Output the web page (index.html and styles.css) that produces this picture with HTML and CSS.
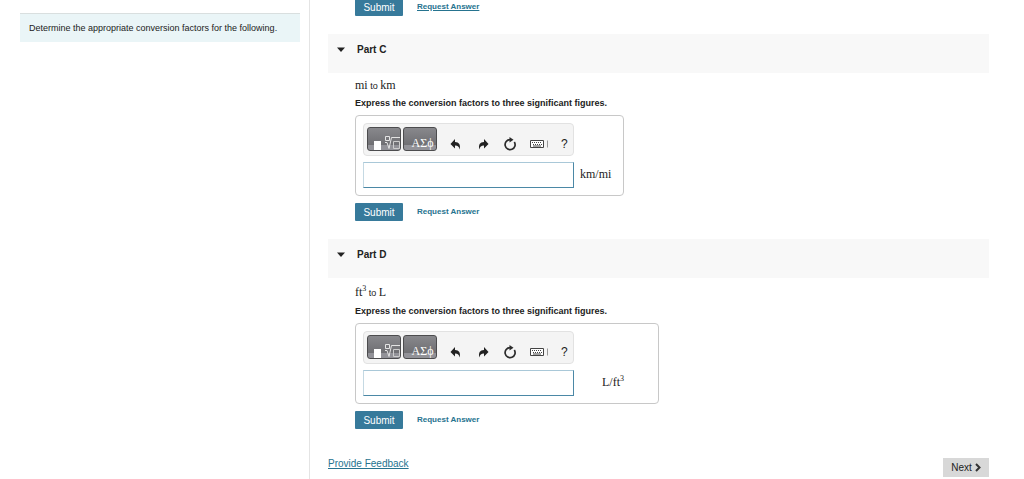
FILE: index.html
```
<!DOCTYPE html>
<html lang="en">
  <head>
    <meta charset="utf-8">
    <meta name="viewport" content="width=device-width, initial-scale=1.0">
    <title>Conversion Factors</title>
    <link rel="stylesheet" href="styles.css">
  </head>

  <body>
    <!-- shared icons -->
    <svg class="icons" width="0" height="0">
      <symbol id="caret" viewBox="0 0 8 5"><path d="M0 .5h8L4 5z" fill="#222"/></symbol>
      <symbol id="template" viewBox="0 0 32 22">
        <path d="M6 13h7v9H6z" fill="#fff"/>
        <path d="M17.500 8.500h4v4h-4z M17 14.500h2l2 6 2.500-11H32" fill="none" stroke="#e4e4e4"/>
        <path d="M25.500 13.500h6v7h-6z" fill="none" stroke="#ccc"/>
      </symbol>
      <symbol id="undo" viewBox="0 0 12 12"><path d="M5 1v3c4 0 6 3 4.500 7.500C9 8.500 8 7.500 5 7.500v3L.5 6z" fill="#222"/></symbol>
      <symbol id="redo" viewBox="0 0 12 12"><path d="M7 1v3C3 4 1 7 2.500 11.500 3 8.500 4 7.500 7 7.500v3L11.500 6z" fill="#222"/></symbol>
      <symbol id="reset" viewBox="0 0 14 14">
        <path d="M7 2.700A5 5 0 1 0 11.300 5" fill="none" stroke="#2b2b2b" stroke-width="1.700"/>
        <path d="M6.500 0L10.500 2.700 6.500 5.400z" fill="#2b2b2b"/>
      </symbol>
      <symbol id="keyboard" viewBox="0 0 18 10">
        <path d="M.5 1.500h13v7H.5z" fill="#fff" stroke="#444"/>
        <path d="M2 3.500h10M3 5.500h9" stroke="#444" stroke-dasharray="1 1"/>
        <path d="M3 7h8" stroke="#444"/>
        <path d="M17.500 1.500v7" stroke="#999"/>
      </symbol>
    </svg>

    <div class="page">
      <aside class="sidebar">
        <p class="problem">Determine the appropriate conversion factors for the following.</p>
      </aside>

      <main class="main">
        <div class="actions actions-prev">
          <button type="button" class="submit">Submit</button>
          <a href="#" class="request underlined">Request Answer</a>
        </div>

        <section class="part">
          <h2 class="part-header"><svg class="caret"><use href="#caret"/></svg>Part C</h2>
          <div class="part-body">
            <p class="question"><span class="math">mi</span> to <span class="math">km</span></p>
            <label class="instructions" for="answer-c">Express the conversion factors to three significant figures.</label>
            <div class="answer">
              <div class="editor">
                <div class="toolbar">
                  <button type="button" class="palette" aria-label="Templates"><svg><use href="#template"/></svg></button>
                  <button type="button" class="palette symbols">ΑΣϕ</button>
                  <div class="tools">
                    <button type="button" class="tool" aria-label="Undo"><svg width="14" height="12"><use href="#undo"/></svg></button>
                    <button type="button" class="tool" aria-label="Redo"><svg width="14" height="12"><use href="#redo"/></svg></button>
                    <button type="button" class="tool" aria-label="Reset"><svg width="14" height="14"><use href="#reset"/></svg></button>
                    <button type="button" class="tool" aria-label="Keyboard shortcuts"><svg width="18" height="10"><use href="#keyboard"/></svg></button>
                    <button type="button" class="tool help">?</button>
                  </div>
                </div>
                <input type="text" id="answer-c" class="answer-input">
              </div>
              <span class="unit math">km/mi</span>
            </div>
            <div class="actions">
              <button type="button" class="submit">Submit</button>
              <a href="#" class="request">Request Answer</a>
            </div>
          </div>
        </section>

        <section class="part">
          <h2 class="part-header"><svg class="caret"><use href="#caret"/></svg>Part D</h2>
          <div class="part-body">
            <p class="question question-tall"><span class="math">ft<sup>3</sup></span> to <span class="math">L</span></p>
            <label class="instructions" for="answer-d">Express the conversion factors to three significant figures.</label>
            <div class="answer">
              <div class="editor">
                <div class="toolbar">
                  <button type="button" class="palette" aria-label="Templates"><svg><use href="#template"/></svg></button>
                  <button type="button" class="palette symbols">ΑΣϕ</button>
                  <div class="tools">
                    <button type="button" class="tool" aria-label="Undo"><svg width="14" height="12"><use href="#undo"/></svg></button>
                    <button type="button" class="tool" aria-label="Redo"><svg width="14" height="12"><use href="#redo"/></svg></button>
                    <button type="button" class="tool" aria-label="Reset"><svg width="14" height="14"><use href="#reset"/></svg></button>
                    <button type="button" class="tool" aria-label="Keyboard shortcuts"><svg width="18" height="10"><use href="#keyboard"/></svg></button>
                    <button type="button" class="tool help">?</button>
                  </div>
                </div>
                <input type="text" id="answer-d" class="answer-input">
              </div>
              <span class="unit unit-wide math">L/ft<sup>3</sup></span>
            </div>
            <div class="actions">
              <button type="button" class="submit">Submit</button>
              <a href="#" class="request">Request Answer</a>
            </div>
          </div>
        </section>

        <footer class="footer">
          <a href="#" class="feedback">Provide Feedback</a>
          <button type="button" class="next">Next <svg width="6" height="9" viewBox="0 0 6 9"><path d="M1 1l3.500 3.500L1 8" fill="none" stroke="#333" stroke-width="2"/></svg></button>
        </footer>
      </main>
    </div>
  </body>
</html>
```
FILE: styles.css
```
* {
  box-sizing: border-box;
}

body {
  margin: 0;
  background: #fff;
  color: #222;
  font-family: "Liberation Sans", Arial, Helvetica, sans-serif;
  font-size: 9px;
  line-height: 12px;
}

p, h2 {
  margin: 0;
}

button {
  padding: 0;
  border: none;
  font-family: inherit;
  cursor: pointer;
}

svg {
  display: block;
}

.icons {
  position: absolute;
}

.page {
  display: flex;
  min-height: 100vh;
  overflow: hidden;
}

.sidebar {
  flex: 0 0 310px;
  padding: 13px 9px 0 20px;
  border-right: 1px solid #e4e4e4;
}

.problem {
  padding: 8px 9px;
  border-top: 1px solid #d9dfdf;
  background: #eaf5f7;
}

.main {
  flex: 1;
  padding: 0 35px 0 18px;
}

/* submit row */
.actions {
  display: flex;
  align-items: center;
  gap: 14px;
  margin-top: 7px;
}

/* end of the previous part, scrolled partly out of view */
.actions-prev {
  margin: -2px 0 0 27px;
}

.submit {
  width: 48px;
  height: 18px;
  border-radius: 1px;
  background: #377a9b;
  color: #fff;
  font-size: 10px;
}

.request {
  color: #26738f;
  font-size: 8px;
  font-weight: bold;
  text-decoration: none;
}

.underlined {
  text-decoration: underline;
}

/* parts */
.part-header {
  display: flex;
  align-items: flex-start;
  gap: 12px;
  height: 39px;
  margin-top: 18px;
  padding: 10px 9px;
  background: #f8f8f8;
  font-size: 10px;
  line-height: 12px;
}

.caret {
  width: 8px;
  height: 5px;
  margin-top: 3px;
}

.part-body {
  padding: 5px 0 0 27px;
}

.question {
  line-height: 14px;
}

.question-tall {
  padding: 2px 0 1px;
}

.math {
  font-family: "Liberation Serif", "Times New Roman", serif;
  font-size: 12px;
}

.math sup {
  font-size: 8px;
  line-height: 0;
}

.instructions {
  display: block;
  margin-top: 4px;
  font-weight: bold;
}

/* answer box */
.answer {
  display: flex;
  width: fit-content;
  margin-top: 6px;
  padding: 7px;
  border: 1px solid #c8c8c8;
  border-radius: 4px;
}

.editor {
  width: 211px;
}

.toolbar {
  display: flex;
  align-items: flex-start;
  height: 33px;
  padding: 3px;
  border: 1px solid #e2e2e2;
  border-radius: 4px;
  background: #f4f4f4;
}

.palette {
  flex: none;
  width: 34px;
  height: 24px;
  margin-right: 2px;
  border: 1px solid #4c4c4e;
  border-radius: 3px;
  background: linear-gradient(#88888c, #707074 75%, #929298 76%);
}

.palette svg {
  width: 32px;
  height: 22px;
}

.symbols {
  padding: 8px 0 0 5px;
  color: #fff;
  font-family: "Liberation Serif", "Times New Roman", serif;
  font-size: 12px;
  line-height: 14px;
}

.tools {
  display: flex;
  align-items: center;
  gap: 13px;
  height: 14px;
  margin-top: 10px;
  padding-left: 10px;
}

.tool {
  background: none;
}

.help {
  color: #222;
  font-size: 12px;
}

.answer-input {
  display: block;
  width: 100%;
  height: 26px;
  margin-top: 6px;
  padding: 0 4px;
  border: 1px solid #4b88a6;
  border-top-color: #a9c8d8;
  border-left-color: #c5d9e3;
  font-size: 12px;
}

.unit {
  min-width: 42px;
  padding: 44px 4px 0 6px;
  line-height: 14px;
}

.unit-wide {
  min-width: 77px;
  padding-left: 28px;
}

/* footer */
.footer {
  display: flex;
  justify-content: space-between;
  align-items: flex-start;
  margin-top: 29px;
}

.feedback {
  color: #26738f;
  font-size: 10px;
}

.next {
  display: flex;
  align-items: center;
  justify-content: center;
  gap: 3px;
  width: 46px;
  height: 19px;
  background: #d8d8d8;
  color: #222;
  font-size: 10px;
}
```
